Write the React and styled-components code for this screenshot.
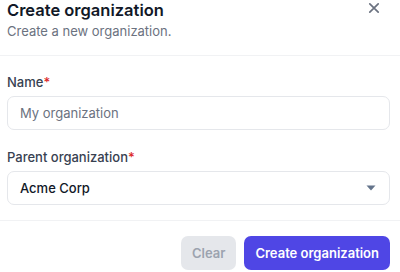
import styled, { createGlobalStyle } from "styled-components";

const GlobalStyle = createGlobalStyle`
  html, body {
    margin: 0;
    padding: 0;
    background: #fff;
  }
  body {
    font-family: Inter, "Noto Sans", sans-serif;
    -webkit-font-smoothing: antialiased;
  }
`;

export default function App() {
  return (
    <>
      <GlobalStyle />
      <Dialog>
        <Header>
          <TitleRow>
            <Title>Create organization</Title>
            <CloseButton aria-label="Close">
              <svg width="12" height="12" viewBox="0 0 12 12" fill="none">
                <path
                  d="M1.8 1.8L10.2 10.2M10.2 1.8L1.8 10.2"
                  stroke="#6b7280"
                  strokeWidth="1.7"
                  strokeLinecap="round"
                />
              </svg>
            </CloseButton>
          </TitleRow>
          <Subtitle>Create a new organization.</Subtitle>
        </Header>
        <Body>
          <Field>
            <Label>
              Name<Required>*</Required>
            </Label>
            <Input placeholder="My organization" />
          </Field>
          <Field>
            <Label>
              Parent organization<Required>*</Required>
            </Label>
            <Select>
              <SelectValue>Acme Corp</SelectValue>
              <svg width="10" height="6" viewBox="0 0 10 6">
                <path d="M0.5 0.5h9L5 5.5z" fill="#64748b" />
              </svg>
            </Select>
          </Field>
        </Body>
        <Footer>
          <Button disabled>Clear</Button>
          <Button $primary>Create organization</Button>
        </Footer>
      </Dialog>
    </>
  );
}

const Dialog = styled.div`
  width: 400px;
  height: 272px;
  display: flex;
  flex-direction: column;
  overflow: hidden;
  background: #fff;
`;

const Header = styled.div`
  padding: 0 10px 14px 7px;
  height: 41px;
  border-bottom: 1px solid #f1f2f4;
`;

const TitleRow = styled.div`
  display: flex;
  align-items: flex-start;
  justify-content: space-between;
`;

const Title = styled.h2`
  margin: 0;
  font-size: 16.5px;
  line-height: 20px;
  font-weight: 600;
  color: #111827;
`;

const CloseButton = styled.button`
  border: none;
  background: none;
  padding: 0;
  margin: 2px 10px 0 0;
  width: 12px;
  height: 12px;
  display: flex;
  cursor: pointer;
`;

const Subtitle = styled.p`
  margin: 1px 0 0;
  font-size: 13px;
  line-height: 20px;
  color: #6b7280;
`;

const Body = styled.div`
  padding: 16px 10px 15px 7px;
  display: flex;
  flex-direction: column;
  gap: 17px;
  border-bottom: 1px solid #f1f2f4;
`;

const Field = styled.div`
  display: flex;
  flex-direction: column;
  gap: 4px;
`;

const Label = styled.label`
  font-size: 13px;
  line-height: 20px;
  font-weight: 500;
  color: #374151;
`;

const Required = styled.span`
  color: #dc2626;
`;

const Input = styled.input`
  box-sizing: border-box;
  height: 34px;
  width: 100%;
  padding: 0 12px;
  border: 1px solid #e5e7eb;
  border-radius: 7px;
  font-family: inherit;
  font-size: 13px;
  color: #111827;
  outline: none;

  &::placeholder {
    color: #6b7280;
  }
`;

const Select = styled.div`
  box-sizing: border-box;
  height: 34px;
  display: flex;
  align-items: center;
  justify-content: space-between;
  padding: 0 13px 0 12px;
  border: 1px solid #e5e7eb;
  border-radius: 7px;
`;

const SelectValue = styled.span`
  font-size: 13px;
  font-weight: 500;
  color: #111827;
`;

const Footer = styled.div`
  display: flex;
  justify-content: flex-end;
  gap: 8px;
  padding: 15px 10px 0 7px;
`;

const Button = styled.button`
  height: 34px;
  padding: 0 11px;
  border: none;
  border-radius: 7px;
  font-family: inherit;
  font-size: 13px;
  font-weight: 600;
  cursor: pointer;
  background: ${(p) => (p.$primary ? "#4f46e5" : "#e5e7eb")};
  color: ${(p) => (p.$primary ? "#fff" : "#9ca3af")};

  &:disabled {
    cursor: default;
  }
`;
